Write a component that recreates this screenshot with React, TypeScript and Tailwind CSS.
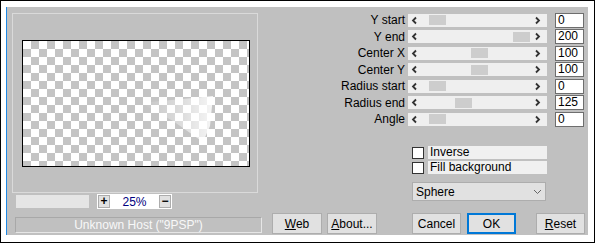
import React from "react";

const font = "font-['Liberation_Sans',Arial,sans-serif]";

const sliders = [
	{ label: "Y start", value: "0", thumb: 21 },
	{ label: "Y end", value: "200", thumb: 105 },
	{ label: "Center X", value: "100", thumb: 63 },
	{ label: "Center Y", value: "100", thumb: 63 },
	{ label: "Radius start", value: "0", thumb: 21 },
	{ label: "Radius end", value: "125", thumb: 47 },
	{ label: "Angle", value: "0", thumb: 21 },
];

const Chevron = ({ dir }: { dir: "left" | "right" }) => (
	<svg width="7" height="9" viewBox="0 0 7 9">
		<path
			d={dir === "left" ? "M5 1.5 L2 4.5 L5 7.5" : "M2 1.5 L5 4.5 L2 7.5"}
			fill="none"
			stroke="#333"
			strokeWidth="1.8"
		/>
	</svg>
);

const SliderRow = ({ label, value, thumb }: { label: string; value: string; thumb: number }) => (
	<div className="flex items-center h-[14px]">
		<span className="w-[138px] text-right text-[12px] leading-none text-black">{label}</span>
		<div className="ml-[3px] w-[139px] h-[13px] bg-[#efefef] flex items-center relative">
			<div className="absolute left-[3px] top-[2px]">
				<Chevron dir="left" />
			</div>
			<div className="h-[10px] w-[17px] bg-[#cdcdcd]" style={{ marginLeft: thumb }} />
			<div className="absolute right-[6px] top-[2px]">
				<Chevron dir="right" />
			</div>
		</div>
		<div className="ml-[8px] w-[29px] h-[15px] bg-white border border-[#6e6e6e] text-[12px] leading-[13px] pl-[2px] text-black">
			{value}
		</div>
	</div>
);

const Check = ({ label }: { label: string }) => (
	<div className="flex items-center h-[13px] ml-[145px]">
		<div className="w-[12px] h-[12px] bg-white border border-[#333]" />
		<div className="ml-[4px] w-[119px] h-[13px] bg-[#f0f0f0] text-[12px] leading-[13px] pl-[2px] text-black">
			{label}
		</div>
	</div>
);

const Btn = ({
	children,
	className = "",
	focus = false,
}: {
	children: React.ReactNode;
	className?: string;
	focus?: boolean;
}) => (
	<div
		className={`h-[21px] flex items-center justify-center text-[12px] text-black bg-[#e1e1e1] ${
			focus ? "border-2 border-[#0078d7]" : "border border-[#adadad]"
		} ${className}`}
	>
		{children}
	</div>
);

export default function App() {
	return (
		<div className={`w-[595px] h-[243px] bg-white border border-black pt-[6px] pl-[5px] pr-[6px] pb-[7px] ${font}`}>
			<div className="flex h-[228px] bg-[#c0c0c0] border-l border-[#1e88e5]">
				{/* left: preview */}
				<div className="w-[260px] flex flex-col">
					<div className="ml-[5px] mt-[6px] w-[246px] h-[180px] border border-[#dadada] pt-[26px] pl-[9px]">
						<div className="relative w-[228px] h-[127px] border border-black bg-[conic-gradient(#c4c4c4_25%,#ffffff_0_50%,#c4c4c4_0_75%,#ffffff_0)] bg-[length:16px_16px]">
							<svg className="absolute left-0 top-0" width="226" height="125">
								<defs>
									<linearGradient id="g" x1="0" y1="0" x2="1" y2="0">
										<stop offset="0" stopColor="#fff" stopOpacity="0" />
										<stop offset="0.6" stopColor="#fff" stopOpacity="0.45" />
										<stop offset="1" stopColor="#fff" stopOpacity="0.85" />
									</linearGradient>
								</defs>
								<polygon points="118,62 190,55 187,85 180,101 150,80" fill="url(#g)" />
							</svg>
						</div>
					</div>
					<div className="flex items-center mt-[1px]">
						<div className="ml-[9px] w-[73px] h-[13px] bg-[#e5e5e5]" />
						<div className="ml-[8px] w-[75px] h-[15px] bg-white flex items-center px-[1px]">
							<div className="w-[12px] h-[13px] bg-[#e1e1e1] border border-[#adadad] text-[12px] leading-[10px] font-bold text-center">
								+
							</div>
							<span className="flex-1 text-center text-[12px] text-[#000080] leading-none">25%</span>
							<div className="w-[12px] h-[13px] bg-[#e1e1e1] border border-[#adadad] text-[12px] leading-[10px] font-bold text-center">
								−
							</div>
						</div>
					</div>
					<div className="ml-[8px] mt-[8px] w-[247px] h-[16px] border border-[#e6e6e6] border-t-[#a8a8a8] border-l-[#a8a8a8] text-center text-[12px] leading-[14px] text-[#f8f8f8]">
						Unknown Host ("9PSP")
					</div>
				</div>

				{/* right: controls */}
				<div className="w-[320px] flex flex-col pt-[6px] pb-[1px]">
					<div className="flex flex-col gap-[2.5px]">
						{sliders.map((s) => (
							<SliderRow key={s.label} {...s} />
						))}
					</div>
					<div className="flex flex-col gap-[2px] mt-[20px]">
						<Check label="Inverse" />
						<Check label="Fill background" />
					</div>
					<div className="ml-[145px] mt-[8px] w-[134px] h-[19px] bg-[#e1e1e1] border border-[#adadad] flex items-center justify-between px-[3px] text-[12px] text-black">
						<span>Sphere</span>
						<svg width="9" height="6" viewBox="0 0 9 6">
							<path d="M1 1 L4.5 4.5 L8 1" fill="none" stroke="#666" strokeWidth="1" />
						</svg>
					</div>
					<div className="flex mt-auto">
						<Btn className="ml-[5px] w-[50px]">
							<span>
								<span className="underline">W</span>eb
							</span>
						</Btn>
						<Btn className="ml-[5px] w-[50px]">
							<span>
								<span className="underline">A</span>bout...
							</span>
						</Btn>
						<Btn className="ml-[35px] w-[49px]">Cancel</Btn>
						<Btn className="ml-[6px] w-[49px]" focus>
							OK
						</Btn>
						<Btn className="ml-[20px] w-[49px]">
							<span>
								<span className="underline">R</span>eset
							</span>
						</Btn>
					</div>
				</div>
			</div>
		</div>
	);
}
